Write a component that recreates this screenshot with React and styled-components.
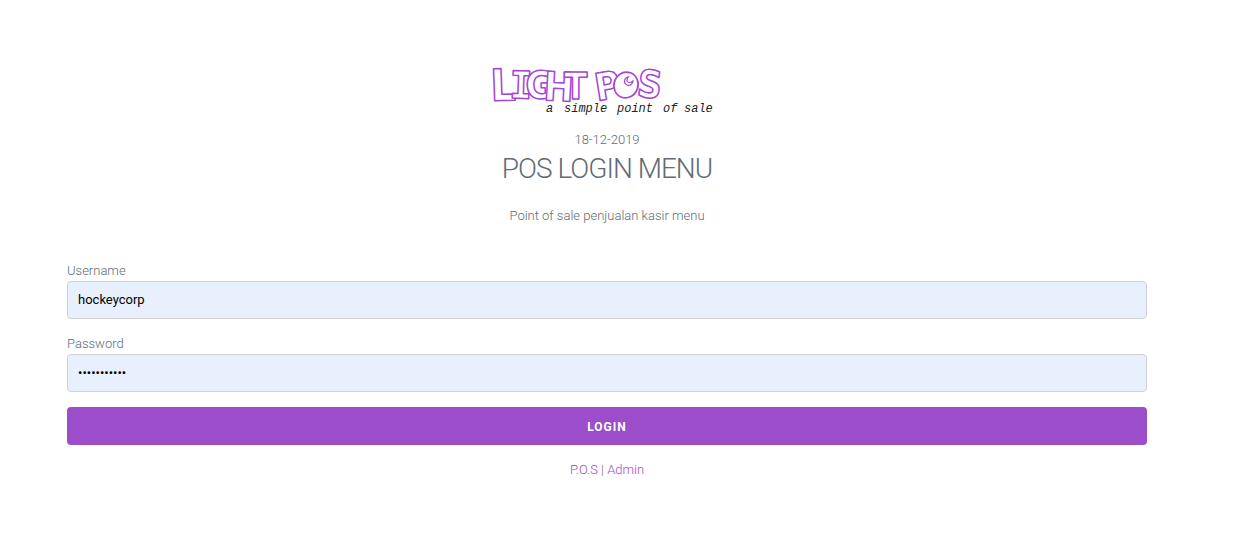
import React from "react";
import styled, { createGlobalStyle } from "styled-components";

const GlobalStyle = createGlobalStyle`
  *, *::before, *::after { box-sizing: border-box; }
  body {
    margin: 0;
    background: #fff;
    color: #606c76;
    font-family: Roboto, "Liberation Sans", sans-serif;
    font-size: 13px;
    font-weight: 300;
    line-height: 20px;
  }
`;

const Page = styled.main`
  padding: 64px 28px 64px 0;
`;

const Container = styled.div`
  max-width: 1120px;
  margin: 0 auto;
  padding: 0 20px;
`;

const Header = styled.header`
  display: flex;
  flex-direction: column;
  align-items: center;
  text-align: center;
`;

const Logo = styled.svg`
  display: block;
  width: 228px;
  height: 60px;
  margin-bottom: 6px;
  overflow: visible;
`;

const LogoLetter = styled.text`
  font-family: ${(p) => (p.$slab ? '"DejaVu Sans Mono", monospace' : '"DejaVu Sans Condensed", "DejaVu Sans", sans-serif')};
  font-size: ${(p) => p.$size || 38}px;
  font-weight: 700;
  fill: #fff;
  stroke: #a544d6;
  stroke-width: 1.5px;
  stroke-linejoin: round;
`;

const LogoTagline = styled.text`
  font-family: "Liberation Mono", monospace;
  font-size: 12px;
  font-style: italic;
  font-weight: 400;
  fill: #222;
`;

const Title = styled.h1`
  margin: 0 0 18px;
  font-size: 28px;
  font-weight: 300;
  line-height: 38px;
  letter-spacing: -1px;
`;

const Text = styled.p`
  margin: 0;
`;

const Form = styled.form`
  display: flex;
  flex-direction: column;
  gap: 15px;
  margin-top: 35px;
`;

const Field = styled.div`
  display: flex;
  flex-direction: column;
`;

const Label = styled.label`
  line-height: 20px;
`;

const Input = styled.input`
  width: 100%;
  height: 38px;
  padding: 6px 10px 8px;
  border: 1px solid #d1d1d1;
  border-radius: 4px;
  background: #e8f0fe;
  color: #000;
  font-family: inherit;
  font-size: 13px;
  font-weight: 400;
  outline: none;

  &:focus { border-color: #9b4dca; }
`;

const Button = styled.button`
  height: 38px;
  padding: 2px 30px 0;
  border: 0;
  border-radius: 4px;
  background: #9b4dca;
  color: #fff;
  font-family: inherit;
  font-size: 12px;
  font-weight: 700;
  letter-spacing: 1px;
  text-transform: uppercase;
  cursor: pointer;
`;

const Links = styled.nav`
  margin-top: 15px;
  text-align: center;
`;

const Link = styled.a`
  color: #9b4dca;
  text-decoration: none;
`;

function LightPosLogo() {
  return (
    <Logo viewBox="0 0 228 60" role="img" aria-label="Light POS, a simple point of sale">
      <LogoLetter x="-2" y="37" rotate="-2" $size={44}>L</LogoLetter>
      <LogoLetter x="16" y="34" rotate="2" $slab>I</LogoLetter>
      <LogoLetter x="33" y="35" rotate="-2">G</LogoLetter>
      <LogoLetter x="50" y="36" rotate="3" $size={40}>H</LogoLetter>
      <LogoLetter x="71" y="35">T</LogoLetter>
      <LogoLetter x="104" y="37" rotate="-9">P</LogoLetter>
      <LogoLetter x="143" y="32" rotate="7">S</LogoLetter>
      <g fill="#fff" stroke="#a544d6" strokeWidth="1.7">
        <ellipse cx="133" cy="21" rx="12" ry="13" transform="rotate(20 133 21)" />
        <path d="M135 13c-4 1-5 6-1 8 3 1 6-1 6-4-2 2-5 2-6 0 0-2 0-3 1-4Z" strokeWidth="1.2" />
      </g>
      <LogoTagline y="48">
        <tspan x="53">a</tspan>
        <tspan x="71">simple</tspan>
        <tspan x="124">point</tspan>
        <tspan x="170">of</tspan>
        <tspan x="191">sale</tspan>
      </LogoTagline>
    </Logo>
  );
}

export default function App() {
  return (
    <>
      <GlobalStyle />
      <Page>
        <Container>
          <Header>
            <LightPosLogo />
            <Text>18-12-2019</Text>
            <Title>POS LOGIN MENU</Title>
            <Text>Point of sale penjualan kasir menu</Text>
          </Header>
          <Form onSubmit={(event) => event.preventDefault()}>
            <Field>
              <Label htmlFor="username">Username</Label>
              <Input id="username" type="text" defaultValue="hockeycorp" />
            </Field>
            <Field>
              <Label htmlFor="password">Password</Label>
              <Input id="password" type="password" defaultValue="hockeycorp1" />
            </Field>
            <Button type="submit">Login</Button>
          </Form>
          <Links>
            <Link href="#pos">P.O.S</Link> | <Link href="#admin">Admin</Link>
          </Links>
        </Container>
      </Page>
    </>
  );
}
